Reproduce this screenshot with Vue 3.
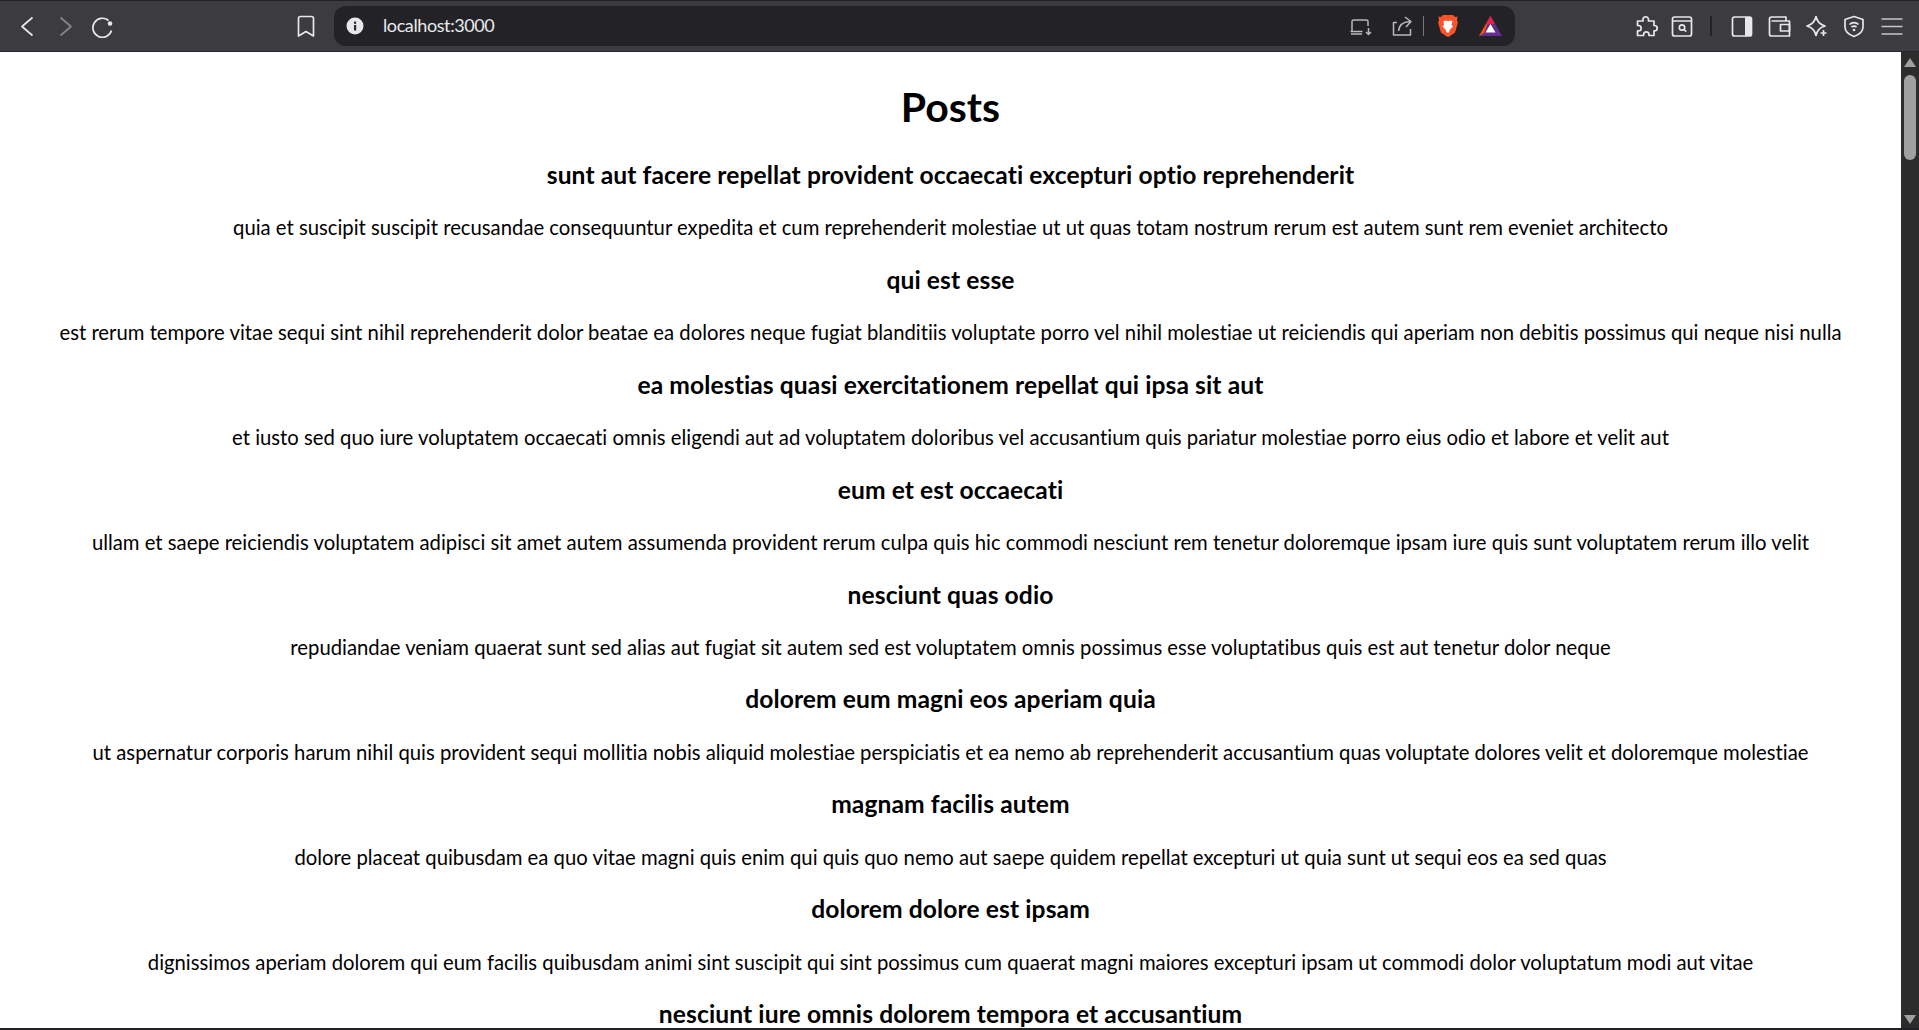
<script setup>
const posts = [
  ['sunt aut facere repellat provident occaecati excepturi optio reprehenderit', 'quia et suscipit suscipit recusandae consequuntur expedita et cum reprehenderit molestiae ut ut quas totam nostrum rerum est autem sunt rem eveniet architecto'],
  ['qui est esse', 'est rerum tempore vitae sequi sint nihil reprehenderit dolor beatae ea dolores neque fugiat blanditiis voluptate porro vel nihil molestiae ut reiciendis qui aperiam non debitis possimus qui neque nisi nulla'],
  ['ea molestias quasi exercitationem repellat qui ipsa sit aut', 'et iusto sed quo iure voluptatem occaecati omnis eligendi aut ad voluptatem doloribus vel accusantium quis pariatur molestiae porro eius odio et labore et velit aut'],
  ['eum et est occaecati', 'ullam et saepe reiciendis voluptatem adipisci sit amet autem assumenda provident rerum culpa quis hic commodi nesciunt rem tenetur doloremque ipsam iure quis sunt voluptatem rerum illo velit'],
  ['nesciunt quas odio', 'repudiandae veniam quaerat sunt sed alias aut fugiat sit autem sed est voluptatem omnis possimus esse voluptatibus quis est aut tenetur dolor neque'],
  ['dolorem eum magni eos aperiam quia', 'ut aspernatur corporis harum nihil quis provident sequi mollitia nobis aliquid molestiae perspiciatis et ea nemo ab reprehenderit accusantium quas voluptate dolores velit et doloremque molestiae'],
  ['magnam facilis autem', 'dolore placeat quibusdam ea quo vitae magni quis enim qui quis quo nemo aut saepe quidem repellat excepturi ut quia sunt ut sequi eos ea sed quas'],
  ['dolorem dolore est ipsam', 'dignissimos aperiam dolorem qui eum facilis quibusdam animi sint suscipit qui sint possimus cum quaerat magni maiores excepturi ipsam ut commodi dolor voluptatum modi aut vitae'],
  ['nesciunt iure omnis dolorem tempora et accusantium', ''],
]
</script>

<template>
  <div class="window">
    <header class="toolbar">
      <div class="nav">
        <svg class="icon" viewBox="0 0 24 24"><path d="M17.5 3.5L7 12.5l10.500 9" /></svg>
        <svg class="icon dim" viewBox="0 0 24 24"><path d="M8.500 3.500L19 12.500 8.500 21.500" /></svg>
        <svg class="icon" viewBox="0 0 24 24"><path d="M19.500 6.500A9.500 9.500 0 1 0 22.500 16.500" /><circle class="solid" cx="21" cy="9.500" r="2.300" /></svg>
      </div>
      <svg class="icon bookmark" viewBox="0 0 24 24"><path d="M4.500 4.500A2 2 0 0 1 6.500 2.500h11a2 2 0 0 1 2 2V22l-7.500-4.500L4.500 22z" /></svg>
      <div class="address">
        <svg class="info" viewBox="0 0 20 20"><circle cx="10" cy="10" r="8.500" fill="#e8e8e8" /><rect x="9" y="9" width="2.200" height="5.500" fill="#2a2a2e" /><rect x="9" y="5.600" width="2.200" height="2.200" fill="#2a2a2e" /></svg>
        <span class="url">localhost:3000</span>
        <div class="address-icons">
          <svg class="icon small" viewBox="0 0 24 24"><path d="M4 17V7.500A1.500 1.500 0 0 1 5.500 6h13A1.500 1.500 0 0 1 20 7.500V12M2.500 17.500h12M3 20h11M20.500 14v6.500M18 18l2.500 2.500L23 18" /></svg>
          <svg class="icon small share" viewBox="0 0 24 24"><path d="M8 8.500H4.500V21h17v-6M9.500 17c.5-5 4-9 11-9.500M16 3l6 4.500-5 5.500" /></svg>
          <span class="sep"></span>
          <svg class="brave" viewBox="0 0 20 22"><path d="M5 0h10l2 2 2.500-.5L19 5.500l1 2-3 10-5 3.500-2 1-2-1-5-3.500-3-10 1-2L.500 1.500 3 2z" fill="#fb542b" /><path d="M5.500 6l3-.5L10 6.500l1.500-1 3 .5-1 4 1.500 1.500-3 3-1 2.500L10 18l-1.500-1-1-2.500-3-3L6 10z" fill="#fff" /></svg>
          <svg class="bat" viewBox="0 0 23 20"><path d="M11.500 0L23 20H0z" fill="#662d91" /><path d="M11.500 0L0 20l5-3z" fill="#ff5000" /><path d="M11.500 0l4.500 8H7z" fill="#e0224e" /><path d="M11.500 8l5 8.500h-10z" fill="#fff" /></svg>
        </div>
      </div>
      <div class="extensions">
        <svg class="icon" viewBox="0 0 24 24"><path d="M9 7V5.500a2.750 2.750 0 0 1 5.500 0V7H20v4.500h.5a2.700 2.700 0 0 1 0 5.400H20v4.600h-5v-1a2.700 2.700 0 0 0-5.400 0v1H3.500v-4.600H4.500a2.700 2.700 0 0 0 0-5.400h-1V7z" /></svg>
        <svg class="icon" viewBox="0 0 24 24"><rect x="2.500" y="3" width="19" height="19" rx="2" /><path d="M2.500 7h19M14 15.500l2.200 2.200" /><circle cx="12" cy="13.500" r="2.700" /></svg>
      </div>
      <span class="divider"></span>
      <div class="tools">
        <svg class="icon" viewBox="0 0 24 24"><rect x="2.500" y="3" width="19" height="19" rx="2" /><path class="solid" d="M15 3h4.500a2 2 0 0 1 2 2v15a2 2 0 0 1-2 2H15z" /></svg>
        <svg class="icon" viewBox="0 0 24 24"><path d="M19 7V3H4.500a2 2 0 0 0-2 2v15a2 2 0 0 0 2 2h18V7H4.500" /><rect x="13.500" y="10.500" width="9" height="6.500" /></svg>
        <svg class="icon" viewBox="0 0 24 24"><path d="M11 2.500c1 5 3.500 8 9 9.500-5.500 1.500-8 4.500-9 9.500-1-5-3.500-8-9-9.500 5.500-1.500 8-4.500 9-9.500z" /><circle class="cut" cx="18.500" cy="19" r="4.500" /><path d="M18.500 16v6M15.500 19h6" /></svg>
        <svg class="icon" viewBox="0 0 24 24"><path d="M12 2.500l9 3v7.500c0 4.500-3.500 7.500-9 9.500-5.500-2-9-5-9-9.500V5.500zM7.500 10.500a6.500 6.500 0 0 1 9 0M9.500 13.200a3.500 3.500 0 0 1 5 0" /><circle class="solid" cx="12" cy="16" r="1.300" /></svg>
        <svg class="icon menu" viewBox="0 0 24 24"><path d="M1.500 5h21M1.500 12.500h21M1.500 20h21" /></svg>
      </div>
    </header>

    <div class="viewport">
      <main class="page">
        <h1>Posts</h1>
        <template v-for="post in posts" :key="post[0]">
          <h3>{{ post[0] }}</h3>
          <p v-if="post[1]">{{ post[1] }}</p>
        </template>
      </main>
      <div class="scrollbar">
        <span class="arrow up"></span>
        <div class="track"><span class="thumb"></span></div>
        <span class="arrow down"></span>
      </div>
    </div>
  </div>
</template>

<style>
html, body { margin: 0; height: 100%; overflow: hidden; }
</style>

<style scoped>
.window {
  height: 1030px;
  display: flex;
  flex-direction: column;
  font-family: "Lato", "Open Sans", sans-serif;
  font-variant-ligatures: none;
  background: #fff;
  border-bottom: 2px solid #202124;
  box-sizing: border-box;
}
.toolbar {
  height: 52px;
  flex: none;
  box-sizing: border-box;
  display: flex;
  align-items: center;
  background: #3b3b40;
  border-top: 1px solid #232327;
  border-bottom: 1px solid #27272a;
  padding-left: 15px;
}
.icon {
  width: 24px;
  height: 24px;
  fill: none;
  stroke: #e8e8e8;
  stroke-width: 1.7;
  stroke-linejoin: round;
  flex: none;
}
.icon .solid { fill: #e8e8e8; stroke: none; }
.icon .cut { fill: #3b3b40; stroke: none; }
.icon.dim { stroke: #85858a; }
.icon.menu { stroke: #c8c8c8; }
.icon.small { stroke: #b9b9bc; stroke-width: 1.5; }
.nav { display: flex; gap: 13px; align-items: center; width: 279px; }
.bookmark { margin-right: 16px; }
.address {
  width: 1181px;
  height: 40px;
  box-sizing: border-box;
  background: #232327;
  border-radius: 12px;
  display: flex;
  align-items: center;
  padding: 0 13px 0 12px;
}
.info { width: 20px; height: 20px; flex: none; margin-left: -1px; }
.url {
  margin-left: 18px;
  margin-top: -2px;
  color: #e8eaed;
  font-size: 18px;
  letter-spacing: -0.4px;
}
.address-icons { margin-left: auto; display: flex; align-items: center; margin-top: -1px; }
.share { margin-left: 17px; margin-right: 1px; }
.sep { width: 1px; height: 20px; background: #77777b; margin: 0 14px 0 9px; }
.brave { width: 20px; height: 22px; flex: none; }
.bat { width: 23px; height: 20px; margin-left: 21px; flex: none; }
.extensions { display: flex; gap: 12.5px; margin-left: 118.5px; }
.divider { width: 2px; height: 20px; background: #232327; margin: 0 17.5px 0 16px; }
.tools { display: flex; gap: 13.5px; }
.viewport { flex: 1; min-height: 0; display: flex; }
.page {
  flex: 1;
  min-width: 0;
  overflow: hidden;
  text-align: center;
  color: #000;
}
h1 { font-size: 41px; font-weight: 700; margin: 27px 0 25px; line-height: 56px; }
h3 { font-size: 24.6px; font-weight: 700; letter-spacing: 0.1px; margin: 23.4px 0 25.4px; line-height: 29px; }
p { font-size: 20.3px; margin: 23.4px 0; line-height: 27.1px; white-space: nowrap; }
.scrollbar {
  width: 18px;
  flex: none;
  background: #2c2c2c;
  display: flex;
  flex-direction: column;
  align-items: center;
}
.track { flex: 1; width: 100%; padding-top: 8px; box-sizing: border-box; display: flex; justify-content: center; }
.thumb { width: 12px; height: 85px; background: #a0a0a0; border-radius: 6px; }
.arrow { width: 0; height: 0; border-left: 6.5px solid transparent; border-right: 6.5px solid transparent; flex: none; }
.arrow.up { border-bottom: 9px solid #a0a0a0; margin-top: 6px; }
.arrow.down { border-top: 9px solid #a0a0a0; margin-bottom: 4px; }
</style>
